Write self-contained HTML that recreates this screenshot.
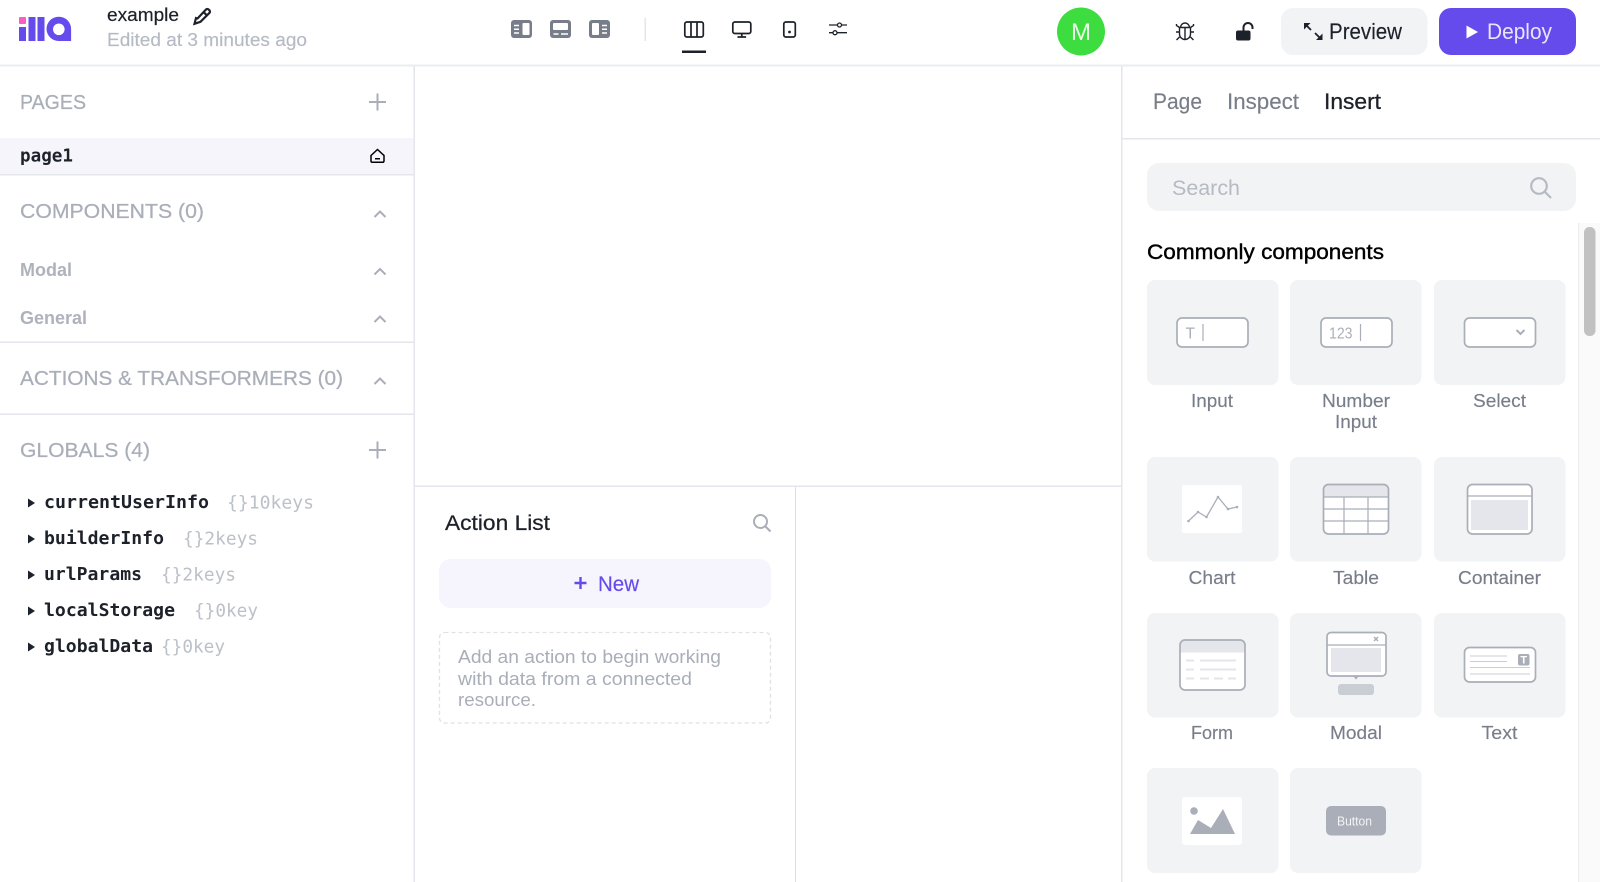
<!DOCTYPE html>
<html lang="en">
<head>
<meta charset="utf-8">
<title>ILLA Builder</title>
<style>
html,body{margin:0;padding:0;background:#fff;overflow:hidden;width:1600px;height:882px}
svg{display:block}
text{font-family:"Liberation Sans",sans-serif}
.m{font-family:"DejaVu Sans Mono","Liberation Mono",monospace}
.h{font-size:20.5px;fill:#a9aeb8;stroke:#a9aeb8;stroke-width:.25}
.s{font-size:18px;fill:#a9aeb8;font-weight:bold;opacity:.95}
.k{font-size:18px;font-weight:bold;fill:#1d2129}
.v{font-size:18px;fill:#bcc0c8}
.l{font-size:18.5px;fill:#787e89;text-anchor:middle;stroke:#787e89;stroke-width:.15}
.c{fill:#f2f3f5}
.o{fill:#fff;stroke:#a9aeb8;stroke-width:1.7}
.g{stroke:#a9aeb8;stroke-width:1.2;fill:none}
.d{stroke:#e5e6eb;stroke-width:2;fill:none}
.t{stroke:#c9cdd4;stroke-width:1;fill:none}
.b{fill:#e5e6eb}
.ic{fill:none;stroke:#1d2129;stroke-width:1.7}
.ch{fill:none;stroke:#a9aeb8;stroke-width:2}
</style>
</head>
<body>
<svg width="1600" height="882" viewBox="0 0 1600 882" xmlns="http://www.w3.org/2000/svg">
<rect width="1600" height="882" fill="#fff"/>

<!-- panel borders -->
<rect x="0" y="64.500" width="1600" height="2" fill="#ebecef"/>
<rect x="413.500" y="66" width="1.500" height="816" fill="#e5e6eb"/>
<rect x="1121" y="66" width="1.500" height="816" fill="#e5e6eb"/>
<rect x="415" y="485.500" width="706" height="1.500" fill="#e5e6eb"/>
<rect x="795" y="487" width="1" height="395" fill="#dcdee3"/>

<!-- logo -->
<rect x="19" y="17" width="7" height="7" rx="1" fill="#f95ec0"/>
<rect x="19" y="27" width="7" height="14" fill="#654aec"/>
<rect x="28.500" y="17" width="7" height="24" fill="#654aec"/>
<rect x="37.500" y="17" width="7" height="24" fill="#654aec"/>
<path fill-rule="evenodd" fill="#654aec" d="M46.500 29a12.300 12.300 0 0 1 24.600 0V41H58.800a12.300 12.300 0 0 1-12.300-12zM58.800 23.500a5.800 5.800 0 1 0 .01 0z"/>

<!-- title -->
<text x="107" y="21" font-size="18.500" fill="#1d2129" stroke="#1d2129" stroke-width=".2" textLength="72" lengthAdjust="spacingAndGlyphs">example</text>
<text x="107" y="46" font-size="18.500" fill="#b5bac3" stroke="#b5bac3" stroke-width=".15" textLength="200" lengthAdjust="spacingAndGlyphs">Edited at 3 minutes ago</text>
<path fill="none" stroke="#1d2129" stroke-width="2.200" d="M197.500 18.500L206 9.500a1.800 1.800 0 0 1 2.600 0l.8.8a1.800 1.800 0 0 1 0 2.600L200.500 21.800l-6 2 1.500-5.800zM203.500 12l3.700 3.700"/>

<!-- layout toggles -->
<rect x="511" y="20" width="21" height="18" rx="3" fill="#787e89"/>
<rect x="522.500" y="23" width="7" height="12" rx="1" fill="#fff"/>
<path d="M514 25.500h5M514 29.300h5M514 33h5" stroke="#fff" stroke-width="1.500"/>
<rect x="550" y="20" width="21" height="18" rx="3" fill="#787e89"/>
<rect x="553" y="23" width="15" height="7" rx="1" fill="#fff"/>
<path d="M553.500 34h5M561 34h7" stroke="#fff" stroke-width="1.500"/>
<rect x="589" y="20" width="21" height="18" rx="3" fill="#787e89"/>
<rect x="592" y="23" width="7" height="12" rx="1" fill="#fff"/>
<path d="M602 25.500h5M602 29.300h5M602 33h5" stroke="#fff" stroke-width="1.500"/>
<rect x="644.500" y="18" width="1.500" height="23" fill="#e5e6eb"/>

<!-- view icons -->
<rect class="ic" x="684.800" y="22" width="18.500" height="15" rx="2"/>
<path class="ic" d="M691 22v15M697 22v15"/>
<rect x="682" y="50.500" width="24" height="2.500" fill="#1d2129"/>
<rect class="ic" x="732.800" y="22" width="18" height="11.500" rx="2"/>
<path class="ic" d="M741.800 33.500V37M737.500 37h8.600"/>
<rect class="ic" x="783.800" y="22" width="11.500" height="15" rx="2"/>
<circle cx="789.500" cy="32" r="1.400" fill="#1d2129"/>
<path d="M829 25h18M829 32.700h18" stroke="#1d2129" stroke-width="1.300"/>
<circle cx="839.500" cy="25" r="2" fill="#fff" stroke="#1d2129" stroke-width="1.300"/>
<circle cx="835" cy="32.700" r="2" fill="#fff" stroke="#1d2129" stroke-width="1.300"/>

<!-- avatar -->
<circle cx="1081" cy="31.500" r="24" fill="#3ddc3f"/>
<text x="1081" y="40" font-size="24" fill="#e8fbe8" text-anchor="middle">M</text>

<!-- bug -->
<path fill="none" stroke="#1d2129" stroke-width="1.400" d="M1180.500 27.500a4.500 4.500 0 0 1 9 0M1179.500 27.500h11v6.500a5.500 5.500 0 0 1-11 0zM1185 28v11M1176.500 24v1.500l3 2M1193.500 24v1.500l-3 2M1176 32h3.500M1194 32h-3.500M1176.500 40l3-3M1193.500 40l-3-3"/>
<!-- lock -->
<rect x="1236" y="30.500" width="14.500" height="10" rx="2" fill="#1d2129"/>
<path d="M1243.500 31v-3.500a4.500 4.500 0 0 1 9 0v1.500" fill="none" stroke="#1d2129" stroke-width="2"/>

<!-- preview -->
<rect x="1281" y="8" width="146.500" height="47" rx="12" fill="#f2f3f5"/>
<path d="M1306 25l5 5M1320 38l-5-5" stroke="#1d2129" stroke-width="1.800"/>
<path d="M1304 23h6.500l-6.500 6.500zM1322.500 40h-6.500l6.500-6.500z" fill="#1d2129"/>
<text x="1329" y="39" font-size="22.500" fill="#1d2129" stroke="#1d2129" stroke-width=".15" textLength="73" lengthAdjust="spacingAndGlyphs">Preview</text>

<!-- deploy -->
<rect x="1439" y="8" width="137" height="47" rx="12" fill="#654aec"/>
<path d="M1466.500 25.500L1478 32l-11.500 6.500z" fill="#fff"/>
<text x="1487" y="39" font-size="22.500" fill="#e9e5fd" textLength="65" lengthAdjust="spacingAndGlyphs">Deploy</text>

<!-- left panel -->
<text class="h" x="20" y="109" textLength="66" lengthAdjust="spacingAndGlyphs">PAGES</text>
<path class="ch" d="M377.500 93.500v17M369 102h17"/>
<rect x="0" y="138" width="413.500" height="36" fill="#f6f5fc"/>
<rect x="0" y="174" width="413.500" height="1.500" fill="#e5e6eb"/>
<text class="m" x="20" y="161.500" font-size="17.500" font-weight="bold" fill="#1d2129" textLength="53" lengthAdjust="spacingAndGlyphs">page1</text>
<path d="M371 155.500l6.500-6 6.500 6V161a1.300 1.300 0 0 1-1.300 1.300h-10.400A1.300 1.300 0 0 1 371 161zM375 158.800h5" fill="none" stroke="#000" stroke-width="1.500"/>

<text class="h" x="20" y="218" textLength="184" lengthAdjust="spacingAndGlyphs">COMPONENTS (0)</text>
<path class="ch" d="M374.500 217l5.500-5.500 5.500 5.500"/>
<text class="s" x="20" y="276" textLength="52" lengthAdjust="spacingAndGlyphs">Modal</text>
<path class="ch" d="M374.500 274.500l5.500-5.500 5.500 5.500"/>
<text class="s" x="20" y="324" textLength="67" lengthAdjust="spacingAndGlyphs">General</text>
<path class="ch" d="M374.500 322l5.500-5.500 5.500 5.500"/>
<rect x="0" y="341.500" width="413.500" height="1.500" fill="#e5e6eb"/>
<text class="h" x="20" y="385" textLength="323" lengthAdjust="spacingAndGlyphs">ACTIONS &amp; TRANSFORMERS (0)</text>
<path class="ch" d="M374.500 384l5.500-5.500 5.500 5.500"/>
<rect x="0" y="413.500" width="413.500" height="1.500" fill="#e5e6eb"/>
<text class="h" x="20" y="457" textLength="130" lengthAdjust="spacingAndGlyphs">GLOBALS (4)</text>
<path class="ch" d="M377.500 441.500v17M369 450h17"/>

<!-- tree -->
<path d="M28 498.500l7 4.500-7 4.500zM28 534.500l7 4.500-7 4.500zM28 570.500l7 4.500-7 4.500zM28 606.500l7 4.500-7 4.500zM28 642.500l7 4.500-7 4.500z" fill="#1d2129"/>
<text class="m k" x="44" y="508" textLength="165" lengthAdjust="spacingAndGlyphs">currentUserInfo</text>
<text class="m v" x="227" y="508.500" textLength="87" lengthAdjust="spacingAndGlyphs">{}10keys</text>
<text class="m k" x="44" y="544" textLength="120" lengthAdjust="spacingAndGlyphs">builderInfo</text>
<text class="m v" x="183" y="544.500" textLength="75" lengthAdjust="spacingAndGlyphs">{}2keys</text>
<text class="m k" x="44" y="580" textLength="98" lengthAdjust="spacingAndGlyphs">urlParams</text>
<text class="m v" x="161" y="580.500" textLength="75" lengthAdjust="spacingAndGlyphs">{}2keys</text>
<text class="m k" x="44" y="616" textLength="131" lengthAdjust="spacingAndGlyphs">localStorage</text>
<text class="m v" x="194" y="616.500" textLength="64" lengthAdjust="spacingAndGlyphs">{}0key</text>
<text class="m k" x="44" y="652" textLength="109" lengthAdjust="spacingAndGlyphs">globalData</text>
<text class="m v" x="161" y="652.500" textLength="64" lengthAdjust="spacingAndGlyphs">{}0key</text>

<!-- action list -->
<text x="445" y="530" font-size="21" fill="#1d2129" stroke="#1d2129" stroke-width=".25" textLength="105" lengthAdjust="spacingAndGlyphs">Action List</text>
<circle cx="760.500" cy="521.500" r="6.500" fill="none" stroke="#a9aeb8" stroke-width="2"/>
<path d="M765.500 526.500l5 5" stroke="#a9aeb8" stroke-width="2"/>
<rect x="439" y="559" width="332" height="49" rx="12" fill="#f6f4fd"/>
<path d="M580.500 577v12M574.500 583h12" stroke="#654aec" stroke-width="2.400"/>
<text x="598" y="591" font-size="21.500" fill="#654aec" stroke="#654aec" stroke-width=".15" textLength="41" lengthAdjust="spacingAndGlyphs">New</text>
<rect x="439.500" y="632.500" width="331" height="90.500" rx="5" fill="none" stroke="#dfe1e6" stroke-width="1.300" stroke-dasharray="4 3"/>
<text x="458" y="663" font-size="18.500" fill="#a9aeb8" textLength="263" lengthAdjust="spacingAndGlyphs">Add an action to begin working</text>
<text x="458" y="685" font-size="18.500" fill="#a9aeb8" textLength="234" lengthAdjust="spacingAndGlyphs">with data from a connected</text>
<text x="458" y="706" font-size="18.500" fill="#a9aeb8" textLength="78" lengthAdjust="spacingAndGlyphs">resource.</text>

<!-- right panel -->
<text x="1153" y="109" font-size="22" fill="#787e89" stroke="#787e89" stroke-width=".15" textLength="49" lengthAdjust="spacingAndGlyphs">Page</text>
<text x="1227" y="109" font-size="22" fill="#787e89" stroke="#787e89" stroke-width=".15" textLength="72" lengthAdjust="spacingAndGlyphs">Inspect</text>
<text x="1324" y="109" font-size="22" fill="#1d2129" stroke="#1d2129" stroke-width=".3" textLength="57" lengthAdjust="spacingAndGlyphs">Insert</text>
<rect x="1122" y="138" width="478" height="1.500" fill="#e5e6eb"/>
<rect x="1147" y="163" width="429" height="48" rx="12" fill="#f2f3f5"/>
<text x="1172" y="195" font-size="21.500" fill="#b5bac3" textLength="68" lengthAdjust="spacingAndGlyphs">Search</text>
<circle cx="1539" cy="186" r="7.800" fill="none" stroke="#b5bac3" stroke-width="2.200"/>
<path d="M1545 192l6 6" stroke="#b5bac3" stroke-width="2.200"/>
<text x="1147" y="259" font-size="21.500" fill="#000" stroke="#000" stroke-width=".4" textLength="237" lengthAdjust="spacingAndGlyphs">Commonly components</text>

<!-- scrollbar -->
<rect x="1578" y="223" width="22" height="659" fill="#fafafa"/>
<rect x="1578" y="223" width="1" height="659" fill="#ececec"/>
<rect x="1584" y="227" width="11.500" height="109" rx="5.500" fill="#c1c1c1"/>

<!-- cards -->
<rect class="c" x="1147" y="280" width="131.500" height="105" rx="8"/>
<rect class="c" x="1290" y="280" width="131.500" height="105" rx="8"/>
<rect class="c" x="1434" y="280" width="131.500" height="105" rx="8"/>
<rect class="c" x="1147" y="457" width="131.500" height="104.500" rx="8"/>
<rect class="c" x="1290" y="457" width="131.500" height="104.500" rx="8"/>
<rect class="c" x="1434" y="457" width="131.500" height="104.500" rx="8"/>
<rect class="c" x="1147" y="613" width="131.500" height="104.500" rx="8"/>
<rect class="c" x="1290" y="613" width="131.500" height="104.500" rx="8"/>
<rect class="c" x="1434" y="613" width="131.500" height="104.500" rx="8"/>
<rect class="c" x="1147" y="768" width="131.500" height="105" rx="8"/>
<rect class="c" x="1290" y="768" width="131.500" height="105" rx="8"/>

<!-- labels -->
<text class="l" x="1212" y="407" textLength="42" lengthAdjust="spacingAndGlyphs">Input</text>
<text class="l" x="1356" y="407" textLength="68" lengthAdjust="spacingAndGlyphs">Number</text>
<text class="l" x="1356" y="428" textLength="42" lengthAdjust="spacingAndGlyphs">Input</text>
<text class="l" x="1499.500" y="407" textLength="53" lengthAdjust="spacingAndGlyphs">Select</text>
<text class="l" x="1212" y="584" textLength="47" lengthAdjust="spacingAndGlyphs">Chart</text>
<text class="l" x="1356" y="584" textLength="46" lengthAdjust="spacingAndGlyphs">Table</text>
<text class="l" x="1499.500" y="584" textLength="83" lengthAdjust="spacingAndGlyphs">Container</text>
<text class="l" x="1212" y="739" textLength="42" lengthAdjust="spacingAndGlyphs">Form</text>
<text class="l" x="1356" y="739" textLength="52" lengthAdjust="spacingAndGlyphs">Modal</text>
<text class="l" x="1499.500" y="739" textLength="36" lengthAdjust="spacingAndGlyphs">Text</text>

<!-- input -->
<rect class="o" x="1177" y="318" width="71" height="29" rx="5"/>
<text x="1185.500" y="338.500" font-size="15.500" fill="#a9aeb8">T</text>
<path class="g" d="M1203 324v17"/>
<!-- number -->
<rect class="o" x="1321" y="318" width="71" height="29" rx="5"/>
<text x="1329" y="338.500" font-size="15.500" fill="#a9aeb8" textLength="23.500" lengthAdjust="spacingAndGlyphs">123</text>
<path class="g" d="M1360.500 324v17"/>
<!-- select -->
<rect class="o" x="1464.500" y="318" width="71" height="29" rx="5"/>
<path d="M1516.500 330l4 4 4-4" fill="none" stroke="#a9aeb8" stroke-width="2"/>

<!-- chart -->
<rect x="1182" y="485" width="60" height="48" rx="2" fill="#fff"/>
<path d="M1188.500 521l9.500-9 8.500 5 11.500-20 10 12 9-2" fill="none" stroke="#a9aeb8" stroke-width="1.300"/>
<circle cx="1188.500" cy="521" r="1.300" fill="#a9aeb8"/><circle cx="1198" cy="512" r="1.300" fill="#a9aeb8"/><circle cx="1206.500" cy="517" r="1.300" fill="#a9aeb8"/><circle cx="1218" cy="497" r="1.300" fill="#a9aeb8"/><circle cx="1228" cy="509" r="1.300" fill="#a9aeb8"/><circle cx="1237" cy="507" r="1.300" fill="#a9aeb8"/>

<!-- table -->
<rect x="1323.500" y="484.500" width="65" height="49.500" rx="5" fill="#fff"/>
<path class="b" d="M1323.500 497v-7.500a5 5 0 0 1 5-5h55a5 5 0 0 1 5 5v7.500z"/>
<path class="g" d="M1323.500 497h65M1323.500 509h65M1323.500 521h65M1344 497v37M1368 497v37"/>
<rect x="1323.500" y="484.500" width="65" height="49.500" rx="5" fill="none" stroke="#a9aeb8" stroke-width="1.700"/>

<!-- container -->
<rect class="o" x="1467.500" y="484.500" width="64.500" height="49.500" rx="5"/>
<path class="g" d="M1467.500 496h64.500"/>
<rect class="b" x="1471" y="500" width="57" height="30"/>

<!-- form -->
<rect x="1180" y="640" width="65" height="50" rx="5" fill="#fff"/>
<path class="b" d="M1180 652.500V645a5 5 0 0 1 5-5h55a5 5 0 0 1 5 5v7.500z"/>
<path class="d" d="M1186 660.500h8M1200 660.500h36M1186 669.500h8M1200 669.500h36M1186 678.500h8M1200 678.500h9M1214 678.500h9M1228 678.500h8"/>
<rect x="1180" y="640" width="65" height="50" rx="5" fill="none" stroke="#a9aeb8" stroke-width="1.700"/>

<!-- modal -->
<path d="M1353 676h6l-3 3.500z" fill="#a9aeb8"/>
<rect class="o" x="1327" y="632.500" width="59" height="43.500" rx="4"/>
<path class="g" d="M1327 645h59"/>
<rect class="b" x="1331" y="648" width="50" height="24"/>
<path d="M1374 637l4 4M1378 637l-4 4" stroke="#a9aeb8" stroke-width="1.500"/>
<rect x="1338" y="684" width="36" height="11" rx="3" fill="#c9cdd4"/>

<!-- text -->
<rect class="o" x="1464.500" y="647.500" width="71" height="34.500" rx="5"/>
<path class="t" d="M1470 656h37M1470 661.500h37M1470 667.500h60M1470 674h60"/>
<rect x="1518" y="654" width="11.500" height="11.500" rx="2" fill="#a9aeb8"/>
<text x="1523.750" y="663.500" font-size="11" font-weight="bold" fill="#fff" text-anchor="middle">T</text>

<!-- image -->
<rect x="1182" y="797" width="60" height="48" rx="3" fill="#fff"/>
<circle cx="1194" cy="811" r="3.800" fill="#a9aeb8"/>
<path d="M1190 834l8-14 13 8 12-19 12 25z" fill="#a9aeb8"/>

<!-- button -->
<rect x="1326" y="806" width="60" height="29.500" rx="5" fill="#a9aeb8"/>
<text x="1354.500" y="825.500" font-size="12.500" fill="#f2f3f5" text-anchor="middle" textLength="35" lengthAdjust="spacingAndGlyphs">Button</text>
</svg>
</body>
</html>
